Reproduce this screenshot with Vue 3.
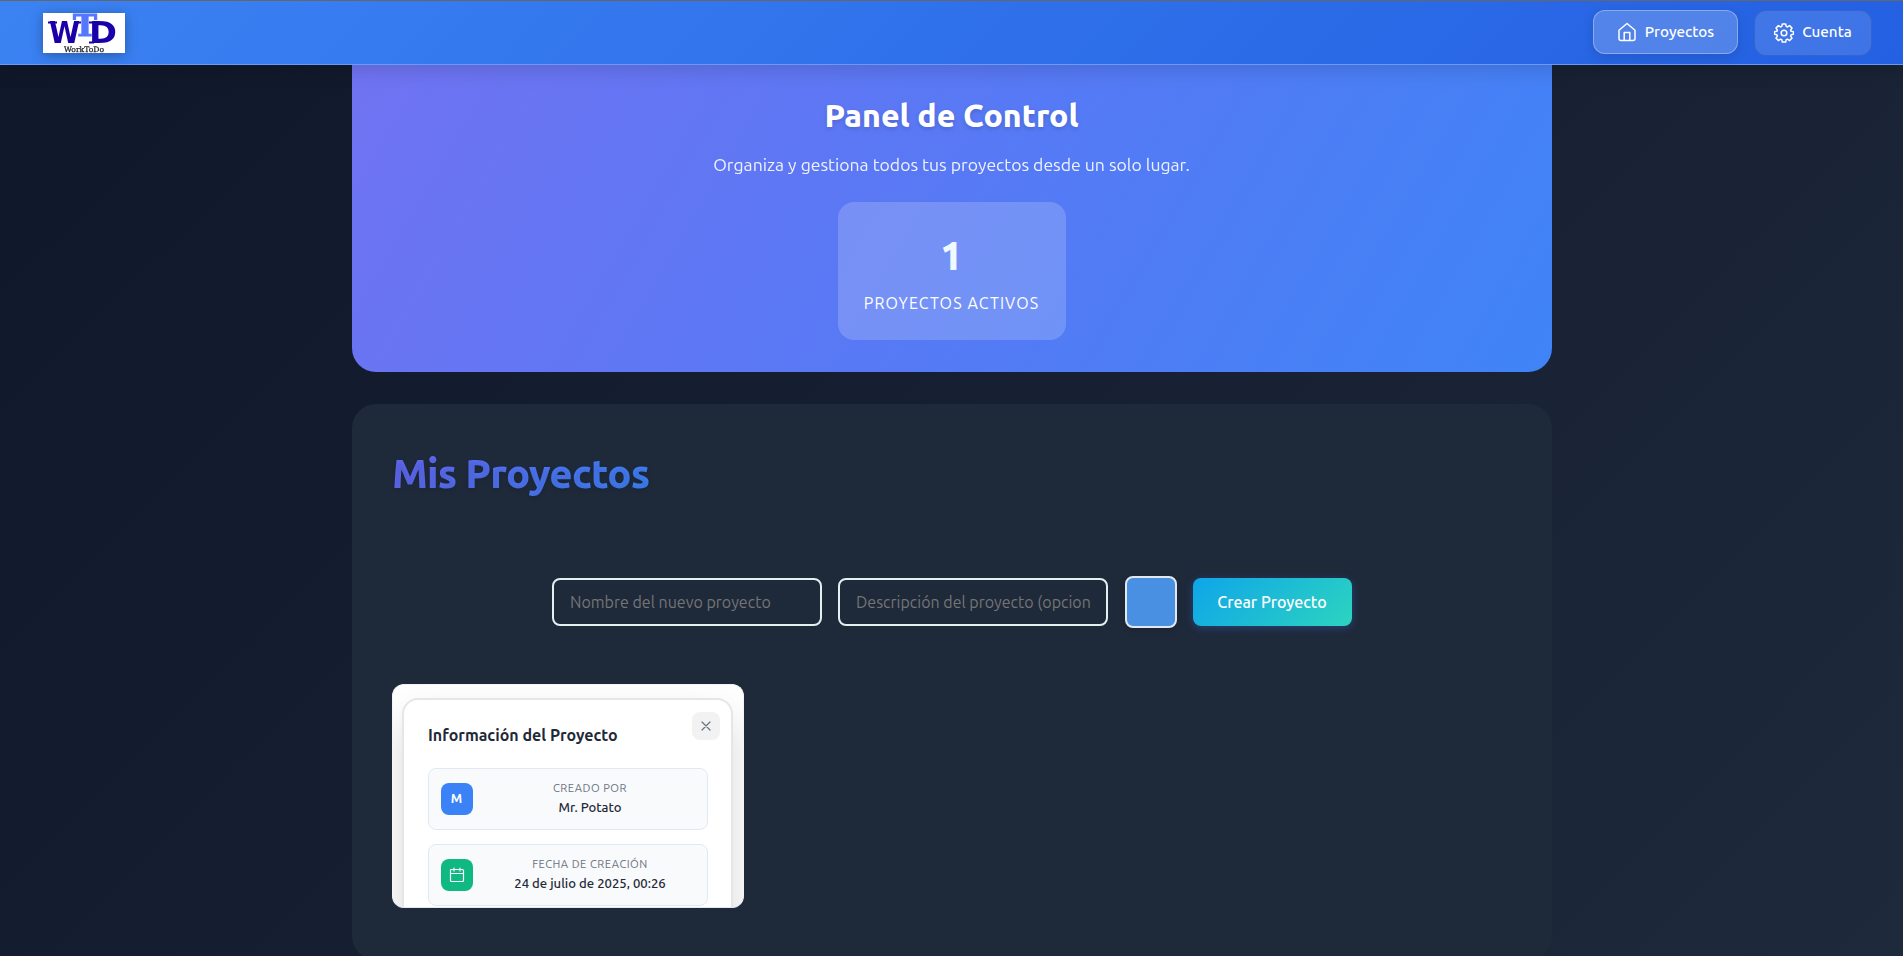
<script setup>
const cards = [
  { label: 'CREADO POR', value: 'Mr. Potato', kind: 'user' },
  { label: 'FECHA DE CREACIÓN', value: '24 de julio de 2025, 00:26', kind: 'date' },
]
</script>

<template>
  <div class="page">
    <header class="topbar">
      <svg class="logo" viewBox="0 0 82 40" width="82" height="40">
        <rect width="82" height="40" fill="#fff" />
        <text x="30" y="22.600" font-family="'DejaVu Serif', serif" font-weight="bold" font-size="29" textLength="24" lengthAdjust="spacingAndGlyphs" fill="#5577ff" stroke="#5577ff" stroke-width="1">T</text>
        <g font-family="'DejaVu Sans', sans-serif" font-weight="bold" fill="#1a00a8">
          <text x="6" y="30.400" font-size="30" textLength="31" lengthAdjust="spacingAndGlyphs">W</text>
          <text x="46" y="30.400" font-size="30" textLength="28" lengthAdjust="spacingAndGlyphs">D</text>
          <path d="M5 8.500h9v2H5zM31 8.500h7v2h-7zM46 8.500h5v2h-5zM46 28.400h5v2h-5z" />
        </g>
        <text x="21" y="38.600" font-family="'DejaVu Serif', serif" font-size="7.500" textLength="40" lengthAdjust="spacingAndGlyphs" fill="#222" stroke="#222" stroke-width=".25">WorkToDo</text>
      </svg>
      <nav class="nav">
        <a class="link active">
          <svg width="20" height="20" viewBox="0 0 20 20" fill="none" stroke="#fff" stroke-width="1.500" stroke-linejoin="round" stroke-linecap="round"><path d="M2 8.200 10 1.500l8 6.700V16.500a2 2 0 0 1-2 2H4a2 2 0 0 1-2-2zM7.200 18V10.500h5.600V18" /></svg>
          <span>Proyectos</span>
        </a>
        <a class="link">
          <svg width="20" height="20" viewBox="0 0 20 20" fill="none" stroke="#fff" stroke-width="1.500" stroke-linejoin="round"><circle cx="10" cy="10" r="2.800" /><path d="M8.300 1h3.400l.5 2.400 1.300.55 2.100-1.350 2.400 2.400-1.400 2.050.55 1.300 2.350.5v2.400l-2.350.5-.55 1.300 1.400 2.050-2.400 2.400-2.100-1.350-1.300.55-.5 2.400H8.300l-.5-2.400-1.300-.55-2.100 1.350L2 15.100l1.400-2.050-.55-1.300L.5 11.250v-2.400l2.350-.5.55-1.300L2 5l2.400-2.400 2.100 1.350 1.300-.55z" /></svg>
          <span>Cuenta</span>
        </a>
      </nav>
    </header>

    <main class="content">
      <section class="hero">
        <h1>Panel de Control</h1>
        <p class="sub">Organiza y gestiona todos tus proyectos desde un solo lugar.</p>
        <div class="stat">
          <strong>1</strong>
          <span>PROYECTOS ACTIVOS</span>
        </div>
      </section>

      <section class="projects">
        <h2><span>Mis Proyectos</span></h2>
        <form class="form">
          <div class="field">Nombre del nuevo proyecto</div>
          <div class="field">Descripción del proyecto (opcion</div>
          <div class="swatch"></div>
          <button type="button" class="create">Crear Proyecto</button>
        </form>

        <article class="card">
          <div class="info">
            <div class="head">
              <h3>Información del Proyecto</h3>
              <button type="button" class="close">
                <svg width="10" height="10" viewBox="0 0 10 10" stroke="#6b7280" stroke-width="1.200" stroke-linecap="round"><path d="M1 1l8 8M9 1 1 9" /></svg>
              </button>
            </div>
            <div v-for="c in cards" :key="c.kind" class="row">
              <div class="badge" :class="c.kind">
                <template v-if="c.kind === 'user'">M</template>
                <svg v-else width="16" height="16" viewBox="0 0 16 16" fill="none" stroke="#fff" stroke-width="1.200" stroke-linejoin="round" stroke-linecap="round"><rect x="1.500" y="2.500" width="13" height="12" rx="1" /><path d="M1.500 6.500h13M5 1v3M11 1v3" /></svg>
              </div>
              <div class="text">
                <span class="label">{{ c.label }}</span>
                <span class="value">{{ c.value }}</span>
              </div>
            </div>
          </div>
        </article>
      </section>
    </main>
  </div>
</template>

<style>
html, body { margin: 0; overflow: hidden; background: #131a2c; }
</style>

<style scoped>
* { box-sizing: border-box; }
.page {
  height: 956px;
  overflow: hidden;
  font-family: Ubuntu, "Noto Sans", sans-serif;
  background: linear-gradient(135deg, #0f172a 0%, #1e293b 100%);
  display: flex;
  flex-direction: column;
}
.topbar {
  position: relative;
  z-index: 2;
  flex: none;
  height: 65px;
  border-top: 1px solid #666;
  border-bottom: 1px solid #6b9af5;
  background: linear-gradient(135deg, #3b82f3, #2460e2);
  box-shadow: 0 4px 20px rgba(0, 0, 0, .15);
  display: flex;
  align-items: center;
  justify-content: space-between;
  padding: 0 31px 0 43px;
}
.logo { display: block; margin-top: 1px; filter: drop-shadow(0 2px 6px rgba(0, 0, 0, .3)); }
.nav { display: flex; gap: 16px; align-items: center; }
.link {
  height: 46px;
  width: 118px;
  display: flex;
  align-items: center;
  justify-content: center;
  gap: 8px;
  border-radius: 12px;
  border: 1px solid rgba(50, 90, 190, .65);
  background: rgba(255, 255, 255, .12);
  color: #fff;
  font-size: 15.200px;
  font-weight: 550;
  line-height: 20px;
}
.link span { margin-top: -2px; }
.active {
  width: 145px;
  height: 44px;
  margin-top: -1px;
  background: rgba(255, 255, 255, .2);
  border-color: rgba(255, 255, 255, .32);
  box-shadow: 0 4px 12px rgba(0, 0, 0, .12);
}
.active span { margin-top: 0; }
.content { width: 1200px; margin: 0 auto; flex: none; }
.hero {
  height: 307px;
  border-radius: 0 0 24px 24px;
  background: linear-gradient(120deg, #7073f2 0%, #5779f5 50%, #3f84f7 100%);
  color: #fff;
  display: flex;
  flex-direction: column;
  align-items: center;
}
h1 { margin: 28px 0 0; font-size: 32px; line-height: 44px; font-weight: 800; text-shadow: 0 2px 4px rgba(0, 0, 0, .15); white-space: nowrap; }
.sub { margin: 15px 0 0; font-size: 17.600px; line-height: 26px; font-weight: 400; opacity: .9; white-space: nowrap; }
.stat {
  margin-top: 24px;
  width: 228px;
  height: 138px;
  border-radius: 16px;
  background: rgba(255, 255, 255, .18);
  display: flex;
  flex-direction: column;
  align-items: center;
}
.stat strong { margin-top: 25px; font-size: 40px; line-height: 58px; font-weight: 800; color: #f0f9ff; }
.stat span { margin-top: 6px; font-size: 16px; line-height: 24px; letter-spacing: 1.100px; font-weight: 450; white-space: nowrap; }
.projects {
  margin-top: 32px;
  height: 556px;
  border-radius: 24px;
  background: #1e293a;
  padding: 40px;
}
h2 { margin: 0; padding-left: .5px; font-size: 40px; line-height: 60px; font-weight: 800; white-space: nowrap; letter-spacing: -.8px; }
h2 span {
  background: linear-gradient(135deg, #6366f1, #3b82f6);
  -webkit-background-clip: text;
  background-clip: text;
  color: transparent;
  text-shadow: 0 2px 4px rgba(0, 0, 0, .1);
}
.form { margin-top: 72px; height: 52px; display: flex; align-items: center; justify-content: center; gap: 16px; }
.field {
  width: 270px;
  height: 48px;
  border: 2px solid #e2f0ef;
  border-radius: 8px;
  padding: 0 16px 0 16.500px;
  color: #757575;
  font-size: 16px;
  font-weight: 400;
  line-height: 44px;
  white-space: nowrap;
  overflow: hidden;
}
.swatch { width: 52px; height: 52px; margin: 0 1px; border: 2px solid #e2e8f0; border-radius: 8px; background: #4a90e2; box-shadow: 0 2px 6px rgba(0, 0, 0, .15); }
.create {
  width: 159px;
  height: 48px;
  margin-left: -1px;
  padding: 0;
  border: 0;
  border-radius: 8px;
  background: linear-gradient(135deg, #0ea5e9, #2dd4bf);
  box-shadow: 0 2px 8px rgba(59, 130, 246, .3);
  color: #fff;
  font-family: inherit;
  font-size: 16px;
  font-weight: 550;
  white-space: nowrap;
}
.card {
  margin-top: 56px;
  width: 352px;
  height: 224px;
  border-radius: 12px;
  overflow: hidden;
  background: #fff;
  border: 1px solid #e2e8f0;
  border-color: #f1f4f8 #f1f4f8 #e2e8f0;
  padding: 13px 10px 0 9px;
}
.info {
  height: 320px;
  border: 2px solid #e6e6e6;
  border-radius: 16px;
  background: #fff;
  box-shadow: 0 20px 40px rgba(0, 0, 0, .15);
  padding: 12px 11px 0 24px;
}
.head { display: flex; justify-content: space-between; height: 56px; }
h3 { margin: 11px 0 0 .5px; font-size: 16px; line-height: 24px; font-weight: 600; color: #1f2937; white-space: nowrap; }
.close { width: 28px; height: 28px; padding: 0; border: 0; border-radius: 8px; background: #f2f2f2; display: flex; align-items: center; justify-content: center; }
.row {
  width: 280px;
  height: 62px;
  margin-bottom: 14px;
  border: 1px solid #e2e8f0;
  border-radius: 8px;
  background: #f8fafc;
  display: flex;
  align-items: center;
  gap: 12px;
  padding: 0 12px;
}
.badge { flex: none; width: 32px; height: 32px; border-radius: 8px; display: flex; align-items: center; justify-content: center; color: #fff; font-size: 12.800px; font-weight: 600; }
.user { background: #3b82f6; padding-bottom: 2px; }
.date { background: #10b981; }
.text { flex: 1; display: flex; flex-direction: column; align-items: center; white-space: nowrap; margin: -2px 0 0 1px; }
.label { font-size: 11.200px; line-height: 18px; color: #6b7280; letter-spacing: .5px; }
.value { font-size: 13.100px; line-height: 20px; font-weight: 560; color: #1f2937; }
</style>
